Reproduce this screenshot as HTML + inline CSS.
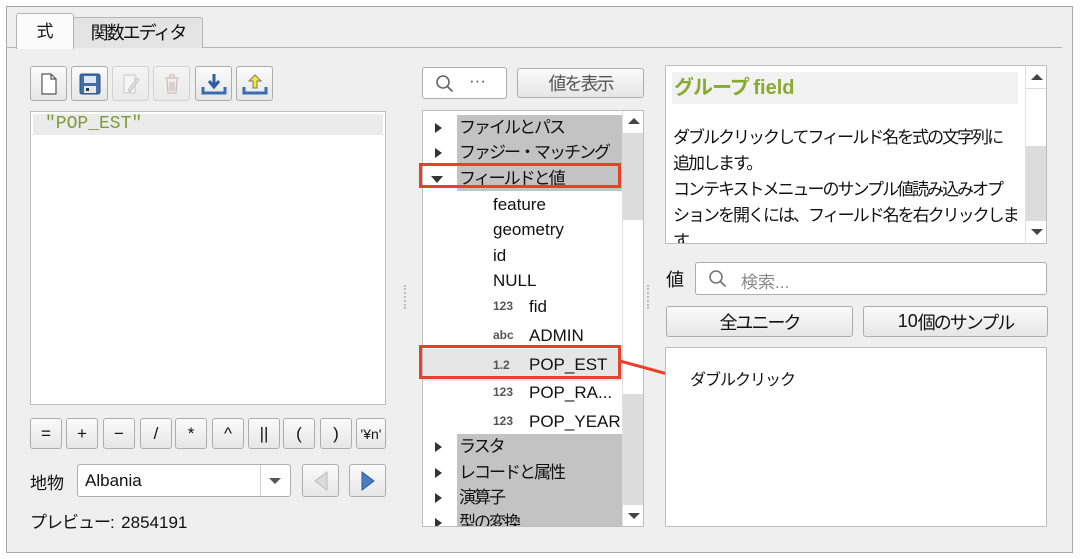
<!DOCTYPE html>
<html><head><meta charset="utf-8"><style>
*{box-sizing:border-box;margin:0;padding:0}
body{width:1080px;height:559px;background:#fff;position:relative;overflow:hidden;font-family:"Liberation Sans","Noto Sans CJK JP",sans-serif;color:#111}
.a{position:absolute}
.btn{position:absolute;background:linear-gradient(#fbfbfb,#e6e6e6);border:1px solid #adadad;border-radius:3px;display:flex;align-items:center;justify-content:center;font-size:17px}
.box{position:absolute;background:#fff;border:1px solid #bdbdbd}
.row{position:absolute;left:0;height:25px;font-size:17px;line-height:25px;white-space:nowrap}
.g{left:34px;width:166px;background:#c3c3c3;padding-left:2px;letter-spacing:-2px;font-size:17px}
.tri{position:absolute;left:-22px;top:8px;width:0;height:0;border-top:5px solid transparent;border-bottom:5px solid transparent;border-left:7px solid #333}
.it{left:70px}
.ty{position:absolute;left:70px;font-size:12px;color:#555;font-weight:bold}
.fn{position:absolute;left:106px}
.jp{letter-spacing:-2px}
.n{letter-spacing:0}
</style></head><body>
<div class="a" style="left:6px;top:6px;width:1067px;height:547px;background:#efefef;border:1px solid #a9a9a9"></div>
<div class="a" style="left:6px;top:47px;width:1056px;height:1px;background:#b5b5b5"></div>
<div class="a jp" style="left:73px;top:17px;width:130px;height:31px;background:#e4e4e4;border:1px solid #b5b5b5;border-bottom:none;border-radius:3px 3px 0 0;font-size:18px;line-height:30px;text-align:center">関数エディタ</div>
<div class="a" style="left:16px;top:13px;width:58px;height:36px;background:#fbfbfb;border:1px solid #b5b5b5;border-bottom:none;border-radius:3px 3px 0 0;font-size:17px;line-height:36px;text-align:center">式</div>

<div class="btn" style="left:30px;top:66px;width:37px;height:35px"><svg width="20" height="24"><path d="M3 2h9l5 5v15H3z M12 2v5h5" fill="#fff" stroke="#555" stroke-width="1.2"/></svg></div>
<div class="btn" style="left:71px;top:66px;width:37px;height:35px"><svg width="22" height="22"><rect x="1" y="1" width="20" height="20" rx="2" fill="#3f6eaa" stroke="#2b4f80"/><rect x="5" y="3" width="12" height="7" fill="#dfe6ef"/><rect x="5" y="13" width="12" height="7" fill="#e8e8e8"/><rect x="7" y="15" width="3" height="3" fill="#333"/></svg></div>
<div class="btn" style="left:112px;top:66px;width:37px;height:35px;opacity:.45"><svg width="20" height="24"><path d="M3 3h11v18H3z" fill="#fff" stroke="#999"/><path d="M7 18l9-12 2 2-9 12z" fill="#ccc" stroke="#999"/></svg></div>
<div class="btn" style="left:153px;top:66px;width:37px;height:35px;opacity:.45"><svg width="20" height="22"><path d="M3 5h14M8 5V2h4v3M5 6l1 14h8l1-14M8 9v9M10 9v9M12 9v9" fill="none" stroke="#a88" stroke-width="1.3"/></svg></div>
<div class="btn" style="left:195px;top:66px;width:37px;height:35px"><svg width="26" height="24"><path d="M13 2v12M8 9l5 6 5-6" fill="none" stroke="#2f5f9e" stroke-width="3"/><path d="M2 15v6h22v-6" fill="none" stroke="#3a6db0" stroke-width="3"/></svg></div>
<div class="btn" style="left:236px;top:66px;width:37px;height:35px"><svg width="26" height="24"><path d="M13 3l-6 6h4v7h4V9h4z" fill="#f0ef2a" stroke="#777" stroke-width="1"/><path d="M2 15v6h22v-6" fill="none" stroke="#3a6db0" stroke-width="3"/></svg></div>

<div class="box" style="left:30px;top:111px;width:356px;height:294px">
<div class="a" style="left:2px;top:2px;width:350px;height:21px;background:#ebebeb"></div>
<div class="a" style="left:14px;top:2px;font-family:'Liberation Mono',monospace;font-size:18px;line-height:20px;color:#7f9a3c">"POP_EST"</div>
</div>

<div class="btn" style="left:30px;top:418px;width:32px;height:31px">=</div>
<div class="btn" style="left:66px;top:418px;width:32px;height:31px">+</div>
<div class="btn" style="left:103px;top:418px;width:32px;height:31px">−</div>
<div class="btn" style="left:140px;top:418px;width:32px;height:31px">/</div>
<div class="btn" style="left:175px;top:418px;width:32px;height:31px">*</div>
<div class="btn" style="left:212px;top:418px;width:32px;height:31px">^</div>
<div class="btn" style="left:248px;top:418px;width:32px;height:31px">||</div>
<div class="btn" style="left:283px;top:418px;width:32px;height:31px">(</div>
<div class="btn" style="left:320px;top:418px;width:32px;height:31px">)</div>
<div class="btn" style="left:356px;top:418px;width:30px;height:31px;font-size:14px">'¥n'</div>

<div class="a" style="left:30px;top:469px;font-size:17px">地物</div>
<div class="a" style="left:77px;top:464px;width:214px;height:33px;background:#fff;border:1px solid #adadad;border-radius:3px;font-size:17px;line-height:31px;padding-left:7px">Albania
<div class="a" style="left:182px;top:0;width:1px;height:31px;background:#cfcfcf"></div>
<div class="a" style="left:191px;top:13px;border-left:6px solid transparent;border-right:6px solid transparent;border-top:6px solid #555"></div></div>
<div class="btn" style="left:302px;top:464px;width:37px;height:33px"><svg width="16" height="22"><path d="M14 2L2 11l12 9z" fill="#dcdcdc" stroke="#bbb"/></svg></div>
<div class="btn" style="left:349px;top:464px;width:37px;height:33px"><svg width="16" height="22"><path d="M2 2l12 9-12 9z" fill="#4a7ec4" stroke="#2d5a96"/></svg></div>
<div class="a" style="left:30px;top:508px;font-size:17px;letter-spacing:-1px">プレビュー:&nbsp; <span class="n">2854191</span></div>

<div class="a" style="left:404px;top:285px;width:2px;height:24px;border-left:2px dotted #bbb"></div>
<div class="a" style="left:647px;top:285px;width:2px;height:24px;border-left:2px dotted #bbb"></div>

<div class="a" style="left:422px;top:67px;width:85px;height:32px;background:#fff;border:1px solid #adadad;border-radius:3px"><svg class="a" style="left:12px;top:6px" width="22" height="20"><circle cx="8" cy="8" r="6" fill="none" stroke="#666" stroke-width="1.6"/><path d="M12.5 12.5l5 5" stroke="#666" stroke-width="1.8"/></svg><span class="a" style="left:46px;top:3px;font-size:17px;color:#555">···</span></div>
<div class="btn jp" style="left:517px;top:68px;width:127px;height:30px;color:#555;font-size:18px">値を表示</div>

<div class="box" style="left:422px;top:110px;width:222px;height:417px;overflow:hidden">
<div style="position:absolute;left:0;top:2px;width:200px;height:415px">
<div class="row g" style="top:2px"><i class="tri"></i>ファイルとパス</div>
<div class="row g" style="top:27px"><i class="tri"></i>ファジー・マッチング</div>
<div class="row g" style="top:53px"><i class="tri" style="left:-26px;top:10px;border-left:6px solid transparent;border-right:6px solid transparent;border-top:7px solid #333;border-bottom:none"></i>フィールドと値</div>
<div class="row it" style="top:79px">feature</div>
<div class="row it" style="top:104px">geometry</div>
<div class="row it" style="top:130px">id</div>
<div class="row it" style="top:155px">NULL</div>
<div class="row" style="top:181px;width:200px"><span class="ty">123</span><span class="fn">fid</span></div>
<div class="row" style="top:210px;width:200px"><span class="ty">abc</span><span class="fn">ADMIN</span></div>
<div class="row" style="top:236px;width:200px;height:32px;line-height:32px;background:#e6e6e6"><span class="ty">1.2</span><span class="fn">POP_EST</span></div>
<div class="row" style="top:267px;width:200px"><span class="ty">123</span><span class="fn">POP_RA...</span></div>
<div class="row" style="top:296px;width:200px"><span class="ty">123</span><span class="fn">POP_YEAR</span></div>
<div class="a" style="left:34px;top:321px;width:166px;height:100px;background:#c3c3c3"></div>
<div class="row g" style="top:321px"><i class="tri"></i>ラスタ</div>
<div class="row g" style="top:347px"><i class="tri"></i>レコードと属性</div>
<div class="row g" style="top:372px"><i class="tri"></i>演算子</div>
<div class="row g" style="top:397px"><i class="tri"></i>型の変換</div>
</div>
<div class="a" style="left:199px;top:0;width:22px;height:415px;background:#dcdcdc;border-left:1px solid #e0e0e0">
<div class="a" style="left:0;top:0;width:21px;height:22px;background:#fff"></div>
<div class="a" style="left:5px;top:7px;border-left:6px solid transparent;border-right:6px solid transparent;border-bottom:6px solid #444"></div>
<div class="a" style="left:0;top:109px;width:21px;height:174px;background:#fff"></div>
<div class="a" style="left:0;top:394px;width:21px;height:22px;background:#fff"></div>
<div class="a" style="left:5px;top:402px;border-left:6px solid transparent;border-right:6px solid transparent;border-top:6px solid #444"></div>
</div>
</div>
<div class="a" style="left:419px;top:163px;width:202px;height:25px;border:3px solid #e8402a"></div>
<div class="a" style="left:419px;top:345px;width:202px;height:34px;border:3px solid #e8402a"></div>
<svg class="a" style="left:618px;top:358px" width="66" height="24"><path d="M2 3L64 20" stroke="#e8402a" stroke-width="3"/></svg>

<div class="box" style="left:665px;top:65px;width:382px;height:179px;overflow:hidden">
<div class="a" style="left:6px;top:6px;width:346px;height:32px;background:#f2f2f2;color:#8aaa2e;font-weight:bold;font-size:20px;line-height:32px;padding-left:2px;letter-spacing:-1px">グループ <span class="n">field</span></div>
<div class="a jp" style="left:7px;top:59px;width:352px;font-size:17px;line-height:26px;white-space:nowrap">ダブルクリックしてフィールド名を式の文字列に<br>追加します。<br>コンテキストメニューのサンプル値読み込みオプ<br>ションを開くには、フィールド名を右クリックしま<br>す。</div>
<div class="a" style="left:359px;top:0;width:22px;height:177px;background:#fff;border-left:1px solid #e0e0e0">
<div class="a" style="left:5px;top:8px;border-left:6px solid transparent;border-right:6px solid transparent;border-bottom:6px solid #444"></div>
<div class="a" style="left:0;top:22px;width:21px;height:1px;background:#ddd"></div>
<div class="a" style="left:0;top:80px;width:21px;height:75px;background:#dcdcdc"></div>
<div class="a" style="left:5px;top:163px;border-left:6px solid transparent;border-right:6px solid transparent;border-top:6px solid #444"></div>
</div>
</div>
<div class="a" style="left:666px;top:266px;font-size:18px">値</div>
<div class="a" style="left:695px;top:262px;width:352px;height:33px;background:#fff;border:1px solid #adadad;border-radius:3px"><svg class="a" style="left:12px;top:6px" width="22" height="20"><circle cx="8" cy="8" r="6" fill="none" stroke="#777" stroke-width="1.6"/><path d="M12.5 12.5l5 5" stroke="#777" stroke-width="1.8"/></svg><span class="a" style="left:45px;top:5px;font-size:17px;color:#888">検索...</span></div>
<div class="btn jp" style="left:666px;top:306px;width:187px;height:31px;font-size:18px">全ユニーク</div>
<div class="btn jp" style="left:863px;top:306px;width:185px;height:31px;font-size:18px"><span class="n">10</span>個のサンプル</div>
<div class="box" style="left:665px;top:347px;width:382px;height:180px"></div>
<div class="a" style="left:690px;top:366px;font-size:16px;letter-spacing:-1px">ダブルクリック</div>
</body></html>
